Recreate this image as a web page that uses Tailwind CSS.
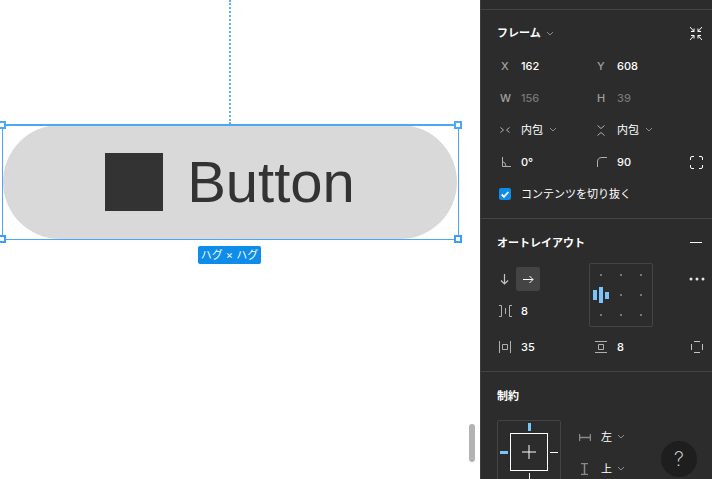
<!DOCTYPE html>
<html lang="ja">
<head>
<meta charset="UTF-8" />
<title>Frame</title>
<script src="https://cdn.jsdelivr.net/npm/@tailwindcss/browser@4"></script>
</head>
<body class="bg-white overflow-hidden font-['Inter','Noto_Sans_CJK_JP',sans-serif]">
<div class="flex w-[712px] h-[479px] overflow-hidden">

  <!-- canvas -->
  <div class="relative w-[480px] h-full bg-white shrink-0">
    <div class="absolute left-[229px] top-0 h-[124px] border-l-2 border-dotted border-[#5cb2f7]"></div>
    <div class="absolute left-[3px] top-[125px] w-[454px] h-[114px] rounded-[57px] bg-[#d9d9d9] flex items-center justify-center gap-[24px] font-['Liberation_Sans',sans-serif] text-[#333333]">
      <div class="w-[58px] h-[58px] bg-[#333333]"></div>
      <span class="text-[58px] leading-none">Button</span>
    </div>
    <div class="absolute left-[2px] top-[124px] w-[457px] h-[116px] border border-t-2 border-[#4aa8f5]"></div>
    <div class="absolute left-[-2px] top-[121px] w-[8px] h-[8px] bg-white border-2 border-[#4aa8f5]"></div>
    <div class="absolute left-[454px] top-[121px] w-[8px] h-[8px] bg-white border-2 border-[#4aa8f5]"></div>
    <div class="absolute left-[-2px] top-[235px] w-[8px] h-[8px] bg-white border-2 border-[#3ba0f5]"></div>
    <div class="absolute left-[454px] top-[235px] w-[8px] h-[8px] bg-white border-2 border-[#3ba0f5]"></div>
    <div class="absolute left-[198px] top-[246px] w-[63px] h-[18px] rounded-[2px] bg-[#0d8ce9] text-white text-[11px] flex items-center justify-center whitespace-nowrap">ハグ × ハグ</div>
    <div class="absolute left-[469px] top-[424px] w-[6px] h-[38px] rounded-full bg-[#b3b3b3]"></div>
  </div>

  <!-- right panel -->
  <div class="relative flex-1 h-full bg-[#2c2c2c] border-l border-[#3d3d3d] text-white text-[11px] font-medium">
    <div class="h-[9px]"></div>

    <!-- frame section -->
    <section class="border-t border-[#444444] h-[209px] pl-[16px] pr-[8px]">
      <div class="h-[40px] flex items-center pt-[7px]">
        <span class="font-bold">フレーム</span>
        <svg class="ml-[5px] mt-[1px]" width="8" height="6" viewBox="0 0 8 6" fill="none" stroke="#8a8a8a"><path d="M1 1l3 3 3-3"/></svg>
        <svg class="ml-auto mr-[2px]" width="12" height="13" viewBox="0 0 12 13" fill="none" stroke="#fff"><path d="M0 0l4 4.500M4 1.500v3H1M12 0L8 4.500M8 1.500v3h3M0 13l4-4.500M4 11.500v-3H1M12 13L8 8.500M8 11.500v-3h3"/></svg>
      </div>
      <div class="grid grid-cols-[24px_72px_24px_1fr] auto-rows-[32px] items-center">
        <span class="text-[#a0a0a0] pl-[4px]">X</span><span>162</span>
        <span class="text-[#a0a0a0] pl-[4px]">Y</span><span>608</span>
        <span class="text-[#a0a0a0] pl-[3px]">W</span><span class="text-[#777777]">156</span>
        <span class="text-[#a0a0a0] pl-[4px]">H</span><span class="text-[#777777]">39</span>

        <svg width="10" height="6" viewBox="0 0 10 6" fill="none" stroke="#b0b0b0" class="ml-[3px]"><path d="M.5.500l3 2.500-3 2.500M9.500.500l-3 2.500 3 2.500"/></svg>
        <span class="flex items-center gap-[6px] font-normal">内包<svg width="8" height="6" viewBox="0 0 8 6" fill="none" stroke="#8a8a8a"><path d="M1 1l3 3 3-3"/></svg></span>
        <svg width="8" height="11" viewBox="0 0 8 11" fill="none" stroke="#b0b0b0" class="ml-[4px]"><path d="M.5.500L4 3.500 7.500.500M.5 10.500L4 7.500l3.500 3"/></svg>
        <span class="flex items-center gap-[6px] font-normal">内包<svg width="8" height="6" viewBox="0 0 8 6" fill="none" stroke="#8a8a8a"><path d="M1 1l3 3 3-3"/></svg></span>

        <svg width="10" height="10" viewBox="0 0 10 10" fill="none" stroke="#b0b0b0" class="ml-[4px]"><path d="M1.500 0v9.500H10M1.500 4.500q3 .5 3.500 5"/></svg>
        <span>0°</span>
        <svg width="10" height="10" viewBox="0 0 10 10" fill="none" stroke="#b0b0b0" class="ml-[4px]"><path d="M.5 10V5Q.5.500 5 .5h5"/></svg>
        <div class="flex items-center justify-between pr-[1px]">
          <span>90</span>
          <svg width="13" height="13" viewBox="0 0 13 13" fill="none" stroke="#fff"><path d="M.5 4V2Q.5.500 2 .5h2M9 .5h2q1.500 0 1.500 1.500v2M12.500 9v2q0 1.500-1.500 1.500H9M4 12.500H2Q.5 12.500.5 11V9"/></svg>
        </div>
      </div>
      <label class="h-[32px] flex items-center">
        <span class="w-[12px] h-[12px] ml-[2px] rounded-[2px] bg-[#0d8ce9] flex items-center justify-center">
          <svg width="8" height="7" viewBox="0 0 8 7" fill="none" stroke="#fff" stroke-width="1.800"><path d="M.7 3.500l2.300 2.300L7.300 1"/></svg>
        </span>
        <span class="ml-[10px] font-normal">コンテンツを切り抜く</span>
      </label>
    </section>

    <!-- auto layout section -->
    <section class="relative border-t border-[#444444] h-[153px] pl-[16px] pr-[8px]">
      <div class="h-[48px] flex items-center pt-[1px]">
        <span class="font-bold">オートレイアウト</span>
        <svg class="ml-auto mr-[2px] mb-[3px]" width="12" height="1" viewBox="0 0 12 1" stroke="#fff"><path d="M0 .5h12"/></svg>
      </div>
      <div class="h-[24px] flex items-center">
        <svg class="ml-[3px]" width="9" height="11" viewBox="0 0 9 11" fill="none" stroke="#c4c4c4" stroke-width="1.200"><path d="M4.500 0v10M1 6.500l3.500 3.500L8 6.500"/></svg>
        <span class="ml-[7px] w-[24px] h-[24px] rounded-[2px] bg-[#444444] flex items-center justify-center">
          <svg width="11" height="9" viewBox="0 0 11 9" fill="none" stroke="#fff"><path d="M0 4.500h10M6.500 1L10 4.500 6.500 8"/></svg>
        </span>
      </div>
      <div class="h-[44px] pb-[4px] flex items-center gap-[9px]">
        <svg class="ml-[2px]" width="13" height="12" viewBox="0 0 13 12" fill="none" stroke="#b0b0b0"><path d="M0 .5h2.500v11H0M13 .5h-2.500v11H13M6.500 3v6"/></svg>
        <span>8</span>
      </div>
      <div class="h-[24px] grid grid-cols-[24px_72px_24px_1fr] items-center">
        <svg class="ml-[2px]" width="12" height="12" viewBox="0 0 12 12" fill="none" stroke="#b0b0b0"><path d="M.5 0v12M11.500 0v12M3.500 3.500h5v5h-5z"/></svg>
        <span>35</span>
        <svg class="ml-[2px]" width="12" height="12" viewBox="0 0 12 12" fill="none" stroke="#b0b0b0"><path d="M0 .5h12M0 11.500h12M3.500 3.500h5v5h-5z"/></svg>
        <div class="flex items-center justify-between pr-[1px]">
          <span>8</span>
          <svg width="12" height="12" viewBox="0 0 12 12" fill="none" stroke="#c4c4c4"><path d="M3 .5h6M3 11.500h6M.5 3v6M11.500 3v6"/></svg>
        </div>
      </div>
      <!-- alignment picker overlaps the rows -->
      <div class="absolute left-[108px] top-[44px] w-[64px] h-[64px] border border-[#444444] rounded-[2px] grid grid-cols-3 grid-rows-3 place-items-center p-[1px]">
        <i class="w-[2px] h-[2px] bg-[#777777]"></i><i class="w-[2px] h-[2px] bg-[#777777]"></i><i class="w-[2px] h-[2px] bg-[#777777]"></i>
        <span class="flex items-center gap-[2px]"><i class="w-[4px] h-[10px] bg-[#7cc4f8]"></i><i class="w-[4px] h-[16px] bg-[#7cc4f8]"></i><i class="w-[4px] h-[7px] bg-[#7cc4f8]"></i></span>
        <i class="w-[2px] h-[2px] bg-[#777777]"></i><i class="w-[2px] h-[2px] bg-[#777777]"></i>
        <i class="w-[2px] h-[2px] bg-[#777777]"></i><i class="w-[2px] h-[2px] bg-[#777777]"></i><i class="w-[2px] h-[2px] bg-[#777777]"></i>
      </div>
      <svg class="absolute left-[208px] top-[58px]" width="16" height="4" viewBox="0 0 16 4" fill="#e6e6e6"><circle cx="2" cy="2" r="1.500"/><circle cx="8" cy="2" r="1.500"/><circle cx="14" cy="2" r="1.500"/></svg>
    </section>

    <!-- constraints section -->
    <section class="border-t border-[#444444] pl-[16px]">
      <div class="h-[48px] flex items-center pt-[1px]">
        <span class="font-bold">制約</span>
      </div>
      <div class="flex">
        <div class="relative w-[64px] h-[64px] border border-[#444444] rounded-[2px] shrink-0">
          <i class="absolute left-[30px] top-[2px] w-[3px] h-[8px] bg-[#7cc4f8]"></i>
          <i class="absolute left-[2px] top-[30px] w-[8px] h-[3px] bg-[#7cc4f8]"></i>
          <i class="absolute right-[2px] top-[31px] w-[8px] h-[1px] bg-white"></i>
          <i class="absolute left-[31px] bottom-[2px] w-[1px] h-[8px] bg-white"></i>
          <div class="absolute left-[12px] top-[12px] w-[38px] h-[38px] border border-white flex items-center justify-center">
            <svg width="14" height="14" viewBox="0 0 14 14" stroke="#fff"><path d="M0 7h14M7 0v14"/></svg>
          </div>
        </div>
        <div class="ml-[18px] mt-[1px] font-normal">
          <div class="h-[32px] flex items-center">
            <svg width="12" height="7" viewBox="0 0 12 7" fill="none" stroke="#8a8a8a"><path d="M.5 0v7M11.500 0v7M0 3.500h12" stroke-width="1.500"/></svg>
            <span class="ml-[10px]">左</span>
            <svg class="ml-[5px]" width="8" height="6" viewBox="0 0 8 6" fill="none" stroke="#8a8a8a"><path d="M1 1l3 3 3-3"/></svg>
          </div>
          <div class="h-[32px] flex items-center">
            <svg class="ml-[2px] mr-[3px]" width="7" height="12" viewBox="0 0 7 12" fill="none" stroke="#8a8a8a" stroke-width="1.500"><path d="M0 .5h7M0 11.500h7M3.500 0v12"/></svg>
            <span class="ml-[10px]">上</span>
            <svg class="ml-[5px]" width="8" height="6" viewBox="0 0 8 6" fill="none" stroke="#8a8a8a"><path d="M1 1l3 3 3-3"/></svg>
          </div>
        </div>
      </div>
    </section>

    <div class="absolute right-[15px] bottom-[2px] w-[36px] h-[36px] rounded-full bg-[#1e1e1e] flex items-center justify-center text-[20px] font-extralight text-[#e6e6e6]">?</div>
  </div>
</div>
</body>
</html>
